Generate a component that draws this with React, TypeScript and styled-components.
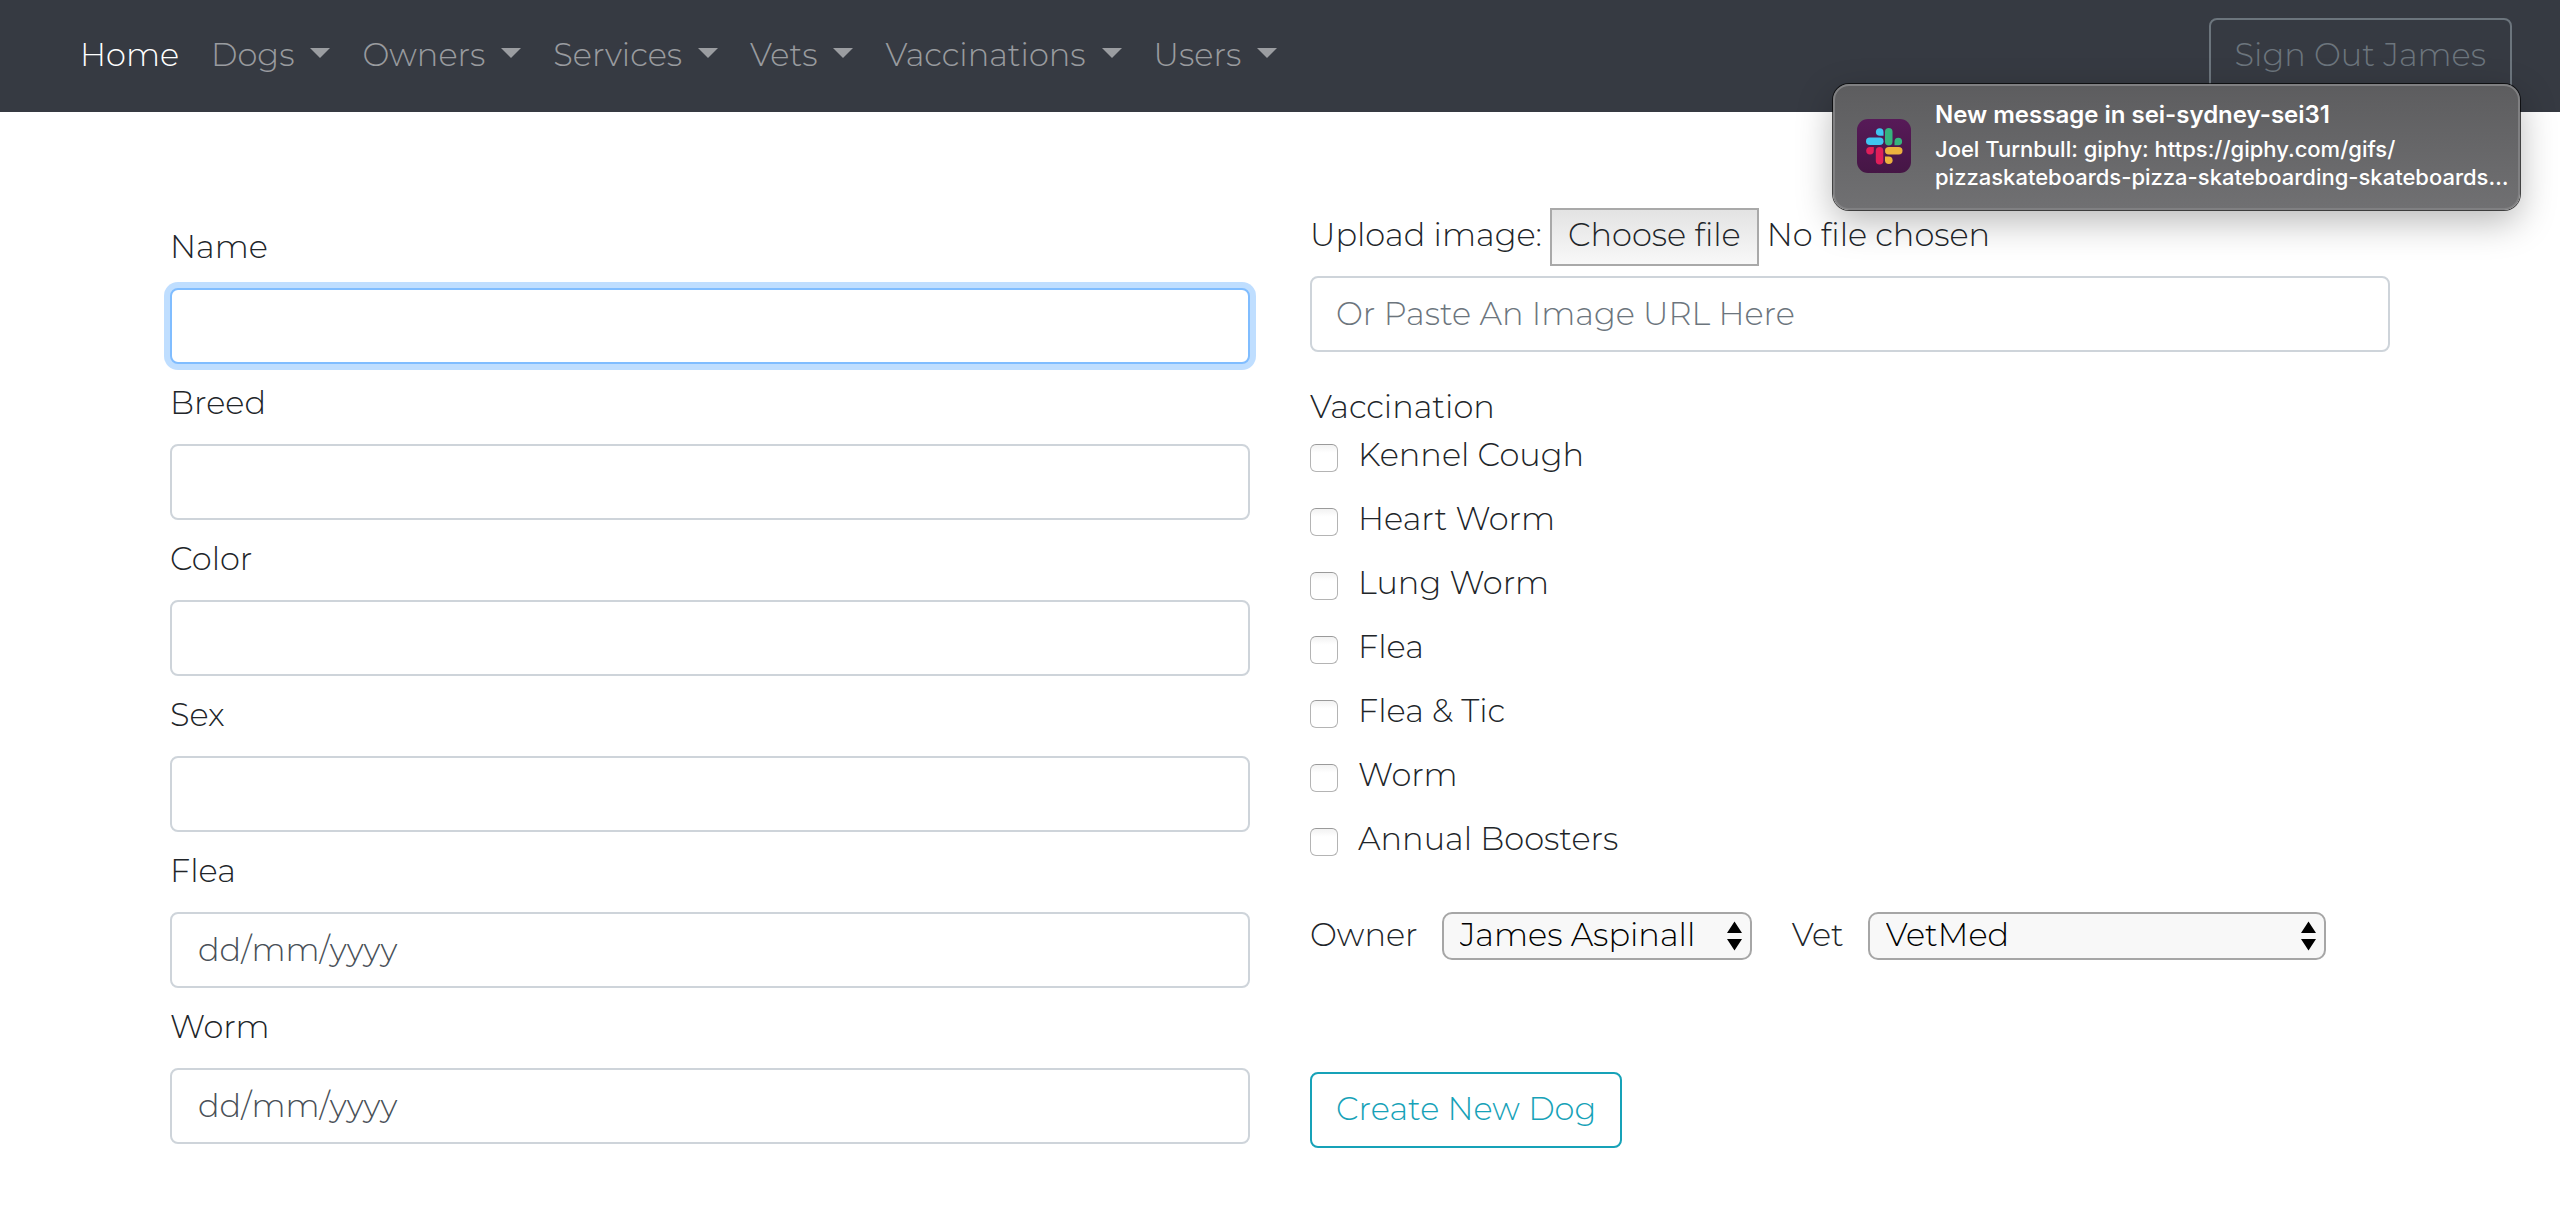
import React from "react";
import styled, { createGlobalStyle, css } from "styled-components";

const GlobalStyle = createGlobalStyle`
  *, *::before, *::after { box-sizing: border-box; }
  body {
    margin: 0;
    background: #fff;
    color: #212529;
    font-family: Montserrat, Inter, "Open Sans", sans-serif;
    font-size: 32px;
    font-weight: 300;
    line-height: 46px;
  }
  input, button, select { font: inherit; margin: 0; }
`;

const Navbar = styled.nav`
  display: flex;
  align-items: flex-start;
  justify-content: space-between;
  padding: 18px 48px 18px 80px;
  background: #363a42;
`;

const NavList = styled.ul`
  display: flex;
  gap: 32px;
  margin: 0;
  padding: 14px 0 0;
  list-style: none;
`;

const NavLink = styled.a<{ $active?: boolean }>`
  color: ${(p) => (p.$active ? "#fff" : "rgba(255, 255, 255, 0.5)")};
  text-decoration: none;
  white-space: nowrap;
`;

const Caret = styled.span`
  display: inline-block;
  margin-left: 16px;
  vertical-align: 8px;
  border-top: 10px solid currentColor;
  border-left: 10px solid transparent;
  border-right: 10px solid transparent;
`;

const OutlineButton = styled.button<{ $color: string }>`
  padding: 12px 24px 14px;
  border: 2px solid ${(p) => p.$color};
  border-radius: 8px;
  background: transparent;
  color: ${(p) => p.$color};
  white-space: nowrap;
`;

const Toast = styled.aside`
  position: absolute;
  top: 84px;
  right: 40px;
  display: flex;
  align-items: center;
  gap: 24px;
  width: 687px;
  height: 126px;
  padding: 0 16px 3px 22px;
  border: 2px solid #808082;
  border-radius: 16px;
  background: linear-gradient(#5d5d5f, #707072);
  box-shadow: 0 0 0 1px rgba(0, 0, 0, 0.7), 0 12px 36px rgba(0, 0, 0, 0.28);
  color: #fff;
  font-family: Inter, sans-serif;
  font-size: 22px;
  font-weight: 500;
  line-height: 28px;
`;

const ToastText = styled.div`
  flex: 1;
  min-width: 0;
`;

const ToastTitle = styled.div`
  margin-bottom: 6px;
  font-size: 24px;
  font-weight: 600;
`;

const ToastLine = styled.div`
  white-space: nowrap;
`;

const SlackIcon = styled.svg`
  flex: none;
  width: 54px;
  height: 54px;
`;

const Form = styled.form`
  display: grid;
  grid-template-columns: 1fr 1fr;
  gap: 60px;
  max-width: 2280px;
  margin: 0 auto;
  padding: 96px 30px 72px;
`;

const Fields = styled.div`
  display: flex;
  flex-direction: column;
  gap: 16px;
  padding-top: 16px;
`;

const Field = styled.div`
  display: flex;
  flex-direction: column;
  gap: 18px;
`;

const TextInput = styled.input<{ $date?: boolean }>`
  width: 100%;
  height: 76px;
  padding: 12px 24px 14px;
  border: 2px solid #ced4da;
  border-radius: 8px;
  background: #fff;
  color: #495057;
  caret-color: transparent;
  outline: none;

  &::placeholder {
    color: #6c757d;
    opacity: 1;
  }

  &:focus {
    border-color: #80bdff;
    box-shadow: 0 0 0 6px rgba(0, 123, 255, 0.25);
  }

  ${(p) =>
    p.$date &&
    css`
      padding-left: 26px;
      font-kerning: none;

      &::placeholder { color: #495057; }
    `}
`;

const Details = styled.div`
  display: flex;
  flex-direction: column;
  align-items: flex-start;
`;

const UploadRow = styled.div`
  display: flex;
  align-items: center;
  gap: 8px;
  margin-bottom: 10px;
`;

const HiddenFile = styled.input`
  position: absolute;
  width: 1px;
  height: 1px;
  overflow: hidden;
  clip-path: inset(50%);
`;

const FileButton = styled.label`
  padding: 2px 16px 6px;
  border: 2px solid #a9a9a9;
  background: linear-gradient(#e3e3e3, #f8f8f8);
`;

const UploadText = styled.label`
  padding-bottom: 4px;
`;

const Vaccines = styled.fieldset`
  display: flex;
  flex-direction: column;
  gap: 18px;
  margin: 32px 0 0;
  padding: 0;
  border: 0;
`;

const Legend = styled.legend`
  padding: 0 0 2px;
`;

const CheckRow = styled.label`
  display: flex;
  align-items: flex-start;
  gap: 20px;
`;

const Checkbox = styled.input`
  appearance: none;
  width: 28px;
  height: 28px;
  border: 1px solid #b4b4b4;
  border-top-color: #9a9a9a;
  border-radius: 6px;
  background: linear-gradient(#f2f2f2, #fff 30%);

  ${CheckRow} & { margin-top: 12px; }

  &:checked { background: #3b82f6; }
`;

const SelectRow = styled.div`
  display: flex;
  align-items: center;
  gap: 40px;
  width: 100%;
  margin: 50px 0 112px;
`;

const SelectGroup = styled.div`
  display: flex;
  align-items: flex-start;
  gap: 24px;
`;

const SelectBox = styled.div<{ $width: number }>`
  display: grid;
  align-items: center;
  width: ${(p) => p.$width}px;

  & > * { grid-area: 1 / 1; }
`;

const Select = styled.select`
  appearance: none;
  width: 100%;
  height: 48px;
  padding: 0 40px 2px 16px;
  border: 2px solid #a6a6a6;
  border-radius: 10px;
  background: #f8f8f8;
  color: #000;
  line-height: 40px;
`;

const Arrows = styled.svg`
  justify-self: end;
  width: 15px;
  height: 30px;
  margin-right: 10px;
  pointer-events: none;
`;

const menus = ["Dogs", "Owners", "Services", "Vets", "Vaccinations", "Users"];

const fields = [
  { id: "name", label: "Name" },
  { id: "breed", label: "Breed" },
  { id: "color", label: "Color" },
  { id: "sex", label: "Sex" },
  { id: "flea", label: "Flea", date: true },
  { id: "worm", label: "Worm", date: true },
];

const vaccines = [
  "Kennel Cough",
  "Heart Worm",
  "Lung Worm",
  "Flea",
  "Flea & Tic",
  "Worm",
  "Annual Boosters",
];

function Picker(props: { id: string; width: number; value: string }) {
  return (
    <SelectBox $width={props.width}>
      <Select id={props.id} defaultValue={props.value}>
        <option>{props.value}</option>
      </Select>
      <Arrows viewBox="0 0 15 30" aria-hidden="true">
        <path d="M7.5 0.5 15 12H0ZM0 18h15L7.5 29.5Z" fill="#000" />
      </Arrows>
    </SelectBox>
  );
}

function Slack() {
  return (
    <SlackIcon viewBox="0 0 54 54" aria-hidden="true">
      <defs>
        <linearGradient id="plum" x1="0" y1="0" x2="0" y2="1">
          <stop offset="0" stopColor="#571a58" />
          <stop offset="1" stopColor="#451645" />
        </linearGradient>
      </defs>
      <rect width="54" height="54" rx="11" fill="url(#plum)" />
      <g fill="#40c5f1">
        <rect x="9" y="18.5" width="17.5" height="7.5" rx="3.75" />
        <path d="M26.5 16.8h-3.8a3.8 3.8 0 1 1 3.8-3.8Z" />
      </g>
      <g fill="#36b37e">
        <rect x="28" y="9" width="7.5" height="17.5" rx="3.75" />
        <path d="M37.5 26.3v-3.8a3.8 3.8 0 1 1 3.8 3.8Z" />
      </g>
      <g fill="#ecb23e">
        <rect x="28" y="28" width="17.5" height="7.5" rx="3.75" />
        <path d="M28 37.5h3.8a3.8 3.8 0 1 1-3.8 3.8Z" />
      </g>
      <g fill="#e01e5a">
        <rect x="18.8" y="28" width="7.5" height="17.5" rx="3.75" />
        <path d="M16.8 28v3.8a3.8 3.8 0 1 1-3.8-3.8Z" />
      </g>
    </SlackIcon>
  );
}

export default function App() {
  return (
    <>
      <GlobalStyle />
      <Navbar>
        <NavList>
          <li>
            <NavLink href="#" $active>Home</NavLink>
          </li>
          {menus.map((m) => (
            <li key={m}>
              <NavLink href="#">
                {m}
                <Caret />
              </NavLink>
            </li>
          ))}
        </NavList>
        <OutlineButton type="button" $color="#6c757d">Sign Out James</OutlineButton>
      </Navbar>

      <Form>
        <Fields>
          {fields.map((f) => (
            <Field key={f.id}>
              <label htmlFor={f.id}>{f.label}</label>
              <TextInput
                id={f.id}
                type="text"
                autoFocus={f.id === "name"}
                placeholder={f.date ? "dd/mm/yyyy" : undefined}
                $date={f.date}
              />
            </Field>
          ))}
        </Fields>

        <Details>
          <UploadRow>
            <UploadText htmlFor="file">Upload image:</UploadText>
            <FileButton htmlFor="file">Choose file</FileButton>
            <HiddenFile id="file" type="file" />
            <UploadText as="span">No file chosen</UploadText>
          </UploadRow>
          <TextInput type="text" aria-label="Image URL" placeholder="Or Paste An Image URL Here" />

          <Vaccines>
            <Legend>Vaccination</Legend>
            {vaccines.map((v) => (
              <CheckRow key={v}>
                <Checkbox type="checkbox" />
                {v}
              </CheckRow>
            ))}
          </Vaccines>

          <SelectRow>
            <SelectGroup>
              <label htmlFor="owner">Owner</label>
              <Picker id="owner" width={310} value="James Aspinall" />
            </SelectGroup>
            <SelectGroup>
              <label htmlFor="vet">Vet</label>
              <Picker id="vet" width={458} value="VetMed" />
            </SelectGroup>
          </SelectRow>

          <OutlineButton type="submit" $color="#17a2b8">Create New Dog</OutlineButton>
        </Details>
      </Form>

      <Toast>
        <Slack />
        <ToastText>
          <ToastTitle>New message in sei-sydney-sei31</ToastTitle>
          <ToastLine>Joel Turnbull: giphy: https://giphy.com/gifs/</ToastLine>
          <ToastLine>pizzaskateboards-pizza-skateboarding-skateboards…</ToastLine>
        </ToastText>
      </Toast>
    </>
  );
}
